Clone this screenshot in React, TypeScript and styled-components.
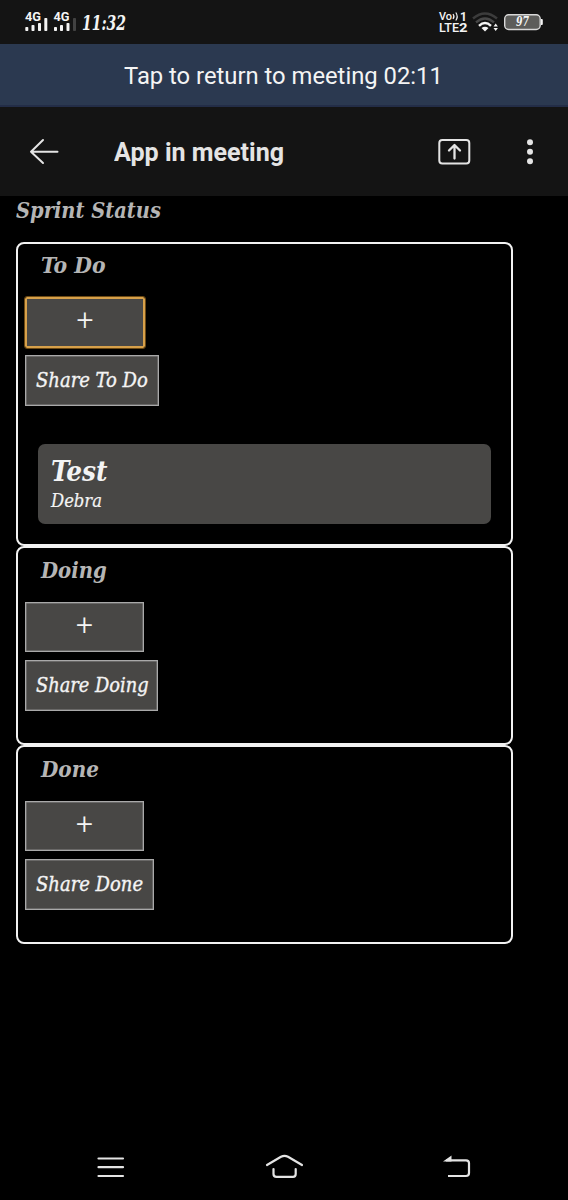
import React from 'react';
import styled, { createGlobalStyle } from 'styled-components';

const GlobalStyle = createGlobalStyle`
  * { box-sizing: border-box; }
  body { margin: 0; background: #000; }
`;

const Screen = styled.div`
  width: 568px;
  height: 1200px;
  display: flex;
  flex-direction: column;
  background: #000;
  overflow: hidden;
  font-family: 'DejaVu Serif Condensed', 'DejaVu Serif', serif;
  white-space: nowrap;
`;

const StatusBar = styled.header`
  height: 44px;
  flex: none;
  display: flex;
  justify-content: space-between;
  background: #141414;
`;

const Banner = styled.div`
  height: 63px;
  flex: none;
  padding-left: 124px;
  background: #2b3950;
  border-bottom: 2px solid #232d47;
`;

const AppBar = styled.nav`
  height: 89px;
  flex: none;
  display: flex;
  align-items: center;
  background: #141414;
`;

const AppTitle = styled.div`
  width: 324px;
  padding-top: 2px;
`;

const Label = styled.span<{ $size: number; $line: number; $scale?: number; $weight?: number; $color?: string; $sans?: boolean; $stroke?: number }>`
  display: block;
  width: max-content;
  font-family: ${(p) => (p.$sans ? "Roboto, sans-serif" : 'inherit')};
  font-style: ${(p) => (p.$sans ? 'normal' : 'italic')};
  font-size: ${(p) => p.$size}px;
  line-height: ${(p) => p.$line}px;
  font-weight: ${(p) => p.$weight ?? 400};
  color: ${(p) => p.$color ?? '#f4f4f4'};
  -webkit-text-stroke: ${(p) => p.$stroke ?? 0}px currentColor;
  transform: scaleX(${(p) => p.$scale ?? 1});
  transform-origin: left center;
`;

const Board = styled.main`
  flex: 1;
  padding: 0 0 0 16px;
`;

const BoardTitle = styled.div`
  height: 46px;
`;

const Column = styled.section<{ $height: number }>`
  width: 497px;
  height: ${(p) => p.$height}px;
  padding: 6px 7px 0;
  border: 2px solid #f2f2f2;
  border-radius: 8px;
`;

const ColumnTitle = styled.div<{ $first?: boolean }>`
  height: ${(p) => (p.$first ? 47 : 48)}px;
  padding: ${(p) => (p.$first ? 0 : 1)}px 0 0 16px;
`;

const Button = styled.button<{ $width: number }>`
  display: flex;
  width: ${(p) => p.$width}px;
  height: 51px;
  margin: 0;
  padding: 0 0 1px 10px;
  align-items: center;
  font-family: inherit;
  background: #484745;
  border: 1px solid #a9a9a9;
  box-shadow: inset 0 0 0 0.5px #8a8a89;
`;

const AddButton = styled(Button)<{ $focused?: boolean }>`
  height: 50px;
  margin-bottom: 8px;
  padding: 0 0 4px;
  justify-content: center;
  ${(p) => p.$focused && `
    height: 51px;
    margin-bottom: 7px;
    padding-bottom: 5px;
    border: 2px solid #d6a04a;
    border-radius: 2px;
    outline: 1px solid #6d4a14;
    box-shadow: none;
  `}
`;

const Card = styled.article`
  width: 453px;
  height: 80px;
  margin: 38px 0 0 13px;
  padding: 12px 13px;
  border-radius: 7px;
  background: #484745;
`;

const NavBar = styled.footer`
  height: 66px;
  flex: none;
  svg { display: block; }
`;

const ink = '#e4e4e4';

type ColumnData = { name: string; height: number; scale: number; share: number; shareScale: number; focused?: boolean; card?: { title: string; owner: string } };

const columns: ColumnData[] = [
  { name: 'To Do', height: 304, scale: 0.985, share: 134, shareScale: 1, focused: true, card: { title: 'Test', owner: 'Debra' } },
  { name: 'Doing', height: 199, scale: 0.95, share: 133, shareScale: 0.99 },
  { name: 'Done', height: 199, scale: 0.965, share: 129, shareScale: 1 },
];

const SignalIcons = () => (
  <svg width="140" height="44" viewBox="0 0 140 44" fill="#f4f4f4">
    <g fontFamily="Roboto, sans-serif" fontWeight="700" fontSize="12.5">
      <text x="25" y="21" textLength="16" lengthAdjust="spacingAndGlyphs">4G</text>
      <text x="53.5" y="21" textLength="16" lengthAdjust="spacingAndGlyphs">4G</text>
    </g>
    <rect x="25.3" y="27" width="3" height="4" rx="0.8" />
    <rect x="31.5" y="25" width="3" height="6" rx="0.8" />
    <rect x="38" y="23" width="3" height="8" rx="0.8" />
    <rect x="44.3" y="18" width="3" height="13" rx="0.8" />
    <rect x="54" y="27" width="3" height="4" rx="0.8" />
    <rect x="60" y="25" width="3" height="6" rx="0.8" />
    <rect x="66.5" y="23" width="3" height="8" rx="0.8" />
    <rect x="73" y="18" width="3" height="13" rx="0.8" fill="#424242" />
    <text x="82" y="30" fontFamily="'DejaVu Serif Condensed', 'DejaVu Serif', serif" fontStyle="italic" fontWeight="700" fontSize="20" textLength="44" lengthAdjust="spacingAndGlyphs">11:32</text>
  </svg>
);

const ConnectionIcons = () => (
  <svg width="138" height="44" viewBox="430 0 138 44" fill="#f4f4f4">
    <g fontFamily="Roboto, sans-serif" fontWeight="700">
      <text x="439" y="20" fontSize="10" fontWeight="500" textLength="13" lengthAdjust="spacingAndGlyphs">Vo</text>
      <text x="460" y="20.800" fontSize="12">1</text>
      <text x="439" y="31.8" fontSize="12" fontWeight="500" textLength="20" lengthAdjust="spacingAndGlyphs">LTE</text>
      <text x="459" y="31.8" fontSize="12" textLength="8.5" lengthAdjust="spacingAndGlyphs">2</text>
    </g>
    <path d="M453 14q2 2.500 0 5M455.800 12.500q2.800 4 0 8" fill="none" stroke="#f4f4f4" strokeWidth="1.200" />
    <g fill="none" strokeWidth="2.400">
      <path d="M473 18.500Q485 8.500 497 18.500" stroke="#3c3c3c" />
      <path d="M476 22.300Q485 14.500 494 22.300" stroke="#484848" />
      <path d="M479 25.800Q485 20 491 25.800" stroke="#f4f4f4" />
    </g>
    <path d="M481.500 28Q485 25.500 488.500 28L485 31.500Z" />
    <path d="M493.500 26.500L495.700 23.500L497.900 26.500ZM493.500 28L495.700 31L497.900 28Z" />
    <rect x="504.700" y="14.700" width="35.500" height="14.800" rx="4" fill="#5c5c5a" stroke="#d8d8d8" strokeWidth="1.400" />
    <path d="M541 19h.8q1 0 1 1v4q0 1-1 1h-.8z" />
    <text x="516" y="26" fontFamily="'DejaVu Serif Condensed', 'DejaVu Serif', serif" fontStyle="italic" fontWeight="700" fontSize="12" textLength="13" lengthAdjust="spacingAndGlyphs">97</text>
  </svg>
);

export default function App() {
  return (
    <>
      <GlobalStyle />
      <Screen>
        <StatusBar>
          <SignalIcons />
          <ConnectionIcons />
        </StatusBar>
        <Banner>
          <Label $sans $size={24} $line={65} $scale={0.991}>Tap to return to meeting 02:11</Label>
        </Banner>
        <AppBar>
          <svg width="114" height="89" viewBox="0 107 114 89" fill="none" stroke={ink} strokeWidth="2" strokeLinecap="round" strokeLinejoin="round">
            <path d="M57.500 151.700H31M43 140L31 151.700L43 163" />
          </svg>
          <AppTitle>
            <Label $sans $size={25} $line={87} $weight={700} $color={ink} $scale={1.003}>App in meeting</Label>
          </AppTitle>
          <svg width="130" height="89" viewBox="438 107 130 89" fill="none" stroke={ink} strokeWidth="2" strokeLinecap="round" strokeLinejoin="round">
            <rect x="439.300" y="140" width="30" height="23.500" rx="3" />
            <path d="M454.500 158.500V146M449 150.500L454.500 145L460 150.500" strokeWidth="2.300" />
            <g fill={ink} stroke="none">
              <circle cx="530" cy="142.200" r="3" />
              <circle cx="530" cy="151.700" r="3" />
              <circle cx="530" cy="161.200" r="3" />
            </g>
          </svg>
        </AppBar>
        <Board>
          <BoardTitle>
            <Label $size={23} $line={28} $weight={700} $color="#b5b5b5" $scale={0.94}>Sprint Status</Label>
          </BoardTitle>
          {columns.map((c) => (
            <Column key={c.name} $height={c.height}>
              <ColumnTitle $first={c.focused}>
                <Label $size={23} $line={30} $weight={700} $color="#b5b5b5" $scale={c.scale}>{c.name}</Label>
              </ColumnTitle>
              <AddButton $width={c.focused ? 120 : 119} $focused={c.focused}>
                <Label $sans $size={30} $line={44} $weight={300}>+</Label>
              </AddButton>
              <Button $width={c.share}>
                <Label $size={20} $line={46} $scale={c.shareScale} $stroke={0.35}>{`Share ${c.name}`}</Label>
              </Button>
              {c.card && (
                <Card>
                  <Label $size={27} $line={32} $weight={700} $scale={1.02}>{c.card.title}</Label>
                  <Label $size={19} $line={25} $scale={0.96} $stroke={0.2}>{c.card.owner}</Label>
                </Card>
              )}
            </Column>
          ))}
        </Board>
        <NavBar>
          <svg width="568" height="66" viewBox="0 1134 568 66" fill="none" stroke={ink} strokeWidth="2.200" strokeLinecap="round" strokeLinejoin="round">
            <path d="M98.500 1158.500H123M98.500 1167.200H123M98.500 1176H123" />
            <path d="M267 1165L281 1156.800Q284.500 1155 288 1156.800L302 1165" />
            <path d="M273.500 1169V1174Q273.500 1176.800 276.500 1176.800H293Q295.700 1176.800 295.700 1174V1169" />
            <path d="M448 1176H466Q469 1176 469 1173V1163Q469 1160.300 466 1160.300H446" strokeLinecap="butt" />
            <path d="M443 1161.400L451.500 1155.500V1161.400Z" fill={ink} stroke="none" />
          </svg>
        </NavBar>
      </Screen>
    </>
  );
}
